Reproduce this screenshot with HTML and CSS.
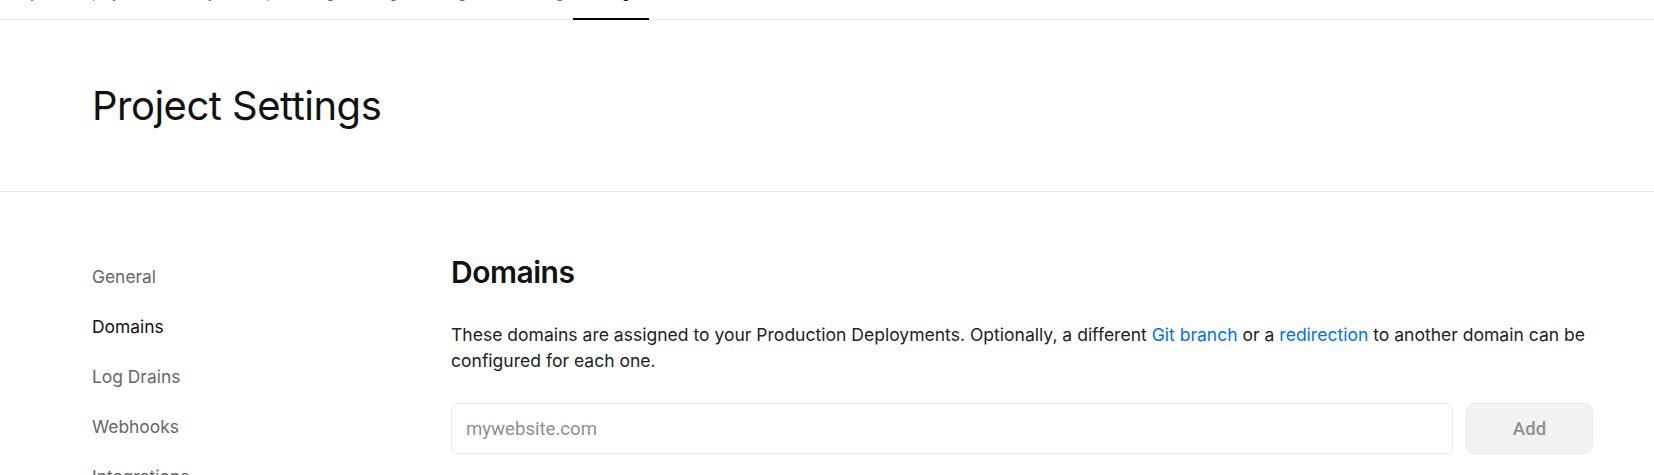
FILE: index.html
```html
<!DOCTYPE html>
<html lang="en">
<head>
<meta charset="utf-8">
<title>Project Settings</title>
<link rel="stylesheet" href="styles.css">
</head>
<body>
<nav class="tabs">
  <a class="tab">Project</a>
  <a class="tab">Deployments</a>
  <a class="tab">Analytics</a>
  <a class="tab">Speed Insights</a>
  <a class="tab">Logs</a>
  <a class="tab">Storage</a>
  <a class="tab">Monitoring</a>
  <a class="tab active">Settings</a>
</nav>
<header class="page-header">
  <h1 class="page-title">Project Settings</h1>
</header>
<div class="layout">
  <aside class="sidebar">
    <a class="side-link">General</a>
    <a class="side-link current">Domains</a>
    <a class="side-link">Log Drains</a>
    <a class="side-link">Webhooks</a>
    <a class="side-link">Integrations</a>
  </aside>
  <main class="content">
    <h2 class="section-title">Domains</h2>
    <p class="section-desc">These domains are assigned to your Production Deployments. Optionally, a different <a class="link">Git branch</a> or a <a class="link">redirection</a> to another domain can be configured for each one.</p>
    <form class="add-domain">
      <input class="domain-input" type="text" placeholder="mywebsite.com">
      <button class="add-btn" type="button" disabled>Add</button>
    </form>
  </main>
</div>
</body>
</html>
```
FILE: styles.css
```css
* { box-sizing: border-box; }
html, body { margin: 0; padding: 0; background: #fff; }
body {
  font-family: Inter, "Noto Sans", sans-serif;
  color: #111;
  overflow: hidden;
}

.tabs {
  display: flex;
  align-items: flex-end;
  height: 20px;
  border-bottom: 1px solid #eaeaea;
}
.tab {
  position: relative;
  display: block;
  font-size: 14px;
  line-height: 20px;
  color: #666;
  padding: 0 9px 16px;
  white-space: nowrap;
}
.tab.active {
  color: #111;
  padding-left: 11px;
  padding-right: 11px;
}
.tab.active::after {
  content: "";
  position: absolute;
  left: 0;
  right: 0;
  bottom: -1px;
  height: 2px;
  background: #000;
}

.page-header {
  padding: 62px 61px 61px 92px;
  border-bottom: 1px solid #eaeaea;
}
.page-title {
  margin: 0;
  font-size: 40px;
  line-height: 48px;
  font-weight: 400;
  letter-spacing: -0.5px;
  color: #111;
}

.layout {
  display: grid;
  grid-template-columns: 359px 1fr;
  padding: 62px 61px 0 92px;
}
.sidebar {
  display: flex;
  flex-direction: column;
  gap: 26px;
  padding-top: 11px;
}
.side-link {
  font-size: 17.4px;
  line-height: 24px;
  color: #666;
}
.side-link.current { color: #111; }

.section-title {
  margin: 0;
  font-size: 30px;
  line-height: 36px;
  font-weight: 600;
  letter-spacing: -0.5px;
  color: #111;
}
.section-desc {
  margin: 32px 0 0;
  font-size: 17.55px;
  line-height: 25.6px;
  color: #222;
}
.link { color: #0070f3; }

.add-domain {
  display: flex;
  gap: 13px;
  margin-top: 30px;
}
.domain-input {
  flex: 1;
  height: 51px;
  border: 1px solid #eaeaea;
  border-radius: 7px;
  padding: 0 14px;
  font-family: Roboto, Arial, sans-serif;
  font-size: 18.6px;
  color: #111;
  background: #fff;
  outline: none;
}
.domain-input::placeholder { color: #8f8f8f; }
.add-btn {
  width: 127px;
  height: 51px;
  border: 1px solid #ebebeb;
  border-radius: 8px;
  background: #f2f2f2;
  color: #8f8f8f;
  font-family: Roboto, Arial, sans-serif;
  font-size: 18.6px;
  font-weight: 500;
}
```
